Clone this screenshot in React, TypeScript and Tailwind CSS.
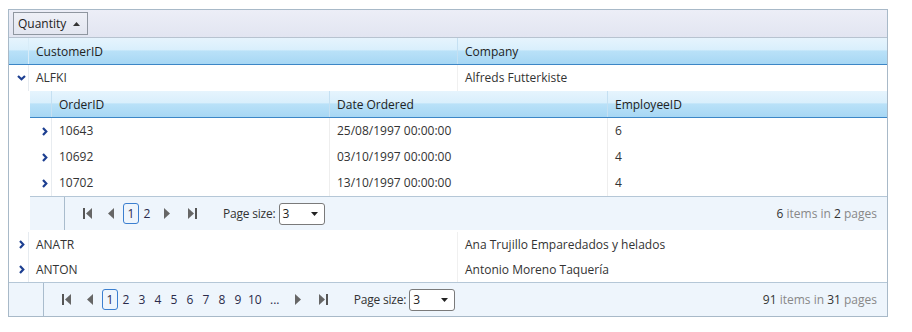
import React from "react";

const font = { fontFamily: '"Open Sans", "Noto Sans", sans-serif' };

function Chevron({ down }: { down?: boolean }) {
  return down ? (
    <svg width="9" height="6" viewBox="0 0 9 6">
      <path d="M1 1 L4.5 4.3 L8 1" fill="none" stroke="#1d3f91" strokeWidth="2.2" />
    </svg>
  ) : (
    <svg width="6" height="9" viewBox="0 0 6 9">
      <path d="M1 1 L4.3 4.5 L1 8" fill="none" stroke="#1d3f91" strokeWidth="2.2" />
    </svg>
  );
}

function First() {
  return (
    <svg width="9" height="11" viewBox="0 0 9 11">
      <rect x="0" y="0" width="2" height="11" fill="#555" />
      <path d="M9 0 L3 5.5 L9 11 Z" fill="#666" />
    </svg>
  );
}
function Prev() {
  return (
    <svg width="6" height="11" viewBox="0 0 6 11">
      <path d="M6 0 L0 5.5 L6 11 Z" fill="#666" />
    </svg>
  );
}
function Next() {
  return (
    <svg width="6" height="11" viewBox="0 0 6 11">
      <path d="M0 0 L6 5.5 L0 11 Z" fill="#666" />
    </svg>
  );
}
function Last() {
  return (
    <svg width="9" height="11" viewBox="0 0 9 11">
      <path d="M0 0 L6 5.5 L0 11 Z" fill="#666" />
      <rect x="7" y="0" width="2" height="11" fill="#555" />
    </svg>
  );
}

function Select() {
  return (
    <div className="flex h-[22px] w-[46px] items-center justify-between rounded-[3px] border border-[#7a7a7a] bg-white pl-[3px] pr-[6px] text-[12px] text-[#222]">
      <span>3</span>
      <svg width="7" height="4" viewBox="0 0 7 4">
        <path d="M0 0 L7 0 L3.5 4 Z" fill="#222" />
      </svg>
    </div>
  );
}

function Pager({
  pages,
  total,
  count,
}: {
  pages: string[];
  total: string;
  count: string;
}) {
  return (
    <div className="flex h-[34px] border-t border-[#b5c7d7] bg-[#eef5fc]">
      <div className="w-[35px] shrink-0 border-r border-[#a9bccd]" />
      <div className="flex flex-1 items-center pl-[18px]">
        <div className="flex items-center">
          <First />
          <div className="ml-[16px]">
            <Prev />
          </div>
          <div className="ml-[9px] flex items-center">
            {pages.map((p, i) => (
              <span
                key={i}
                className={
                  i === 0
                    ? "flex h-[21px] w-[16px] items-center justify-center rounded-[3px] border border-[#3b7fd0] text-[#2a2a4a]"
                    : p === "..."
                    ? "flex h-[21px] min-w-[22px] items-center justify-center px-[4px] text-[#2a2a4a]"
                    : "flex h-[21px] min-w-[16px] items-center justify-center px-[2px] text-[#2a2a4a]"
                }
              >
                {p}
              </span>
            ))}
          </div>
          <div className="ml-[9px]">
            <Next />
          </div>
          <div className="ml-[18px]">
            <Last />
          </div>
        </div>
        <div className="ml-[26px] flex items-center gap-[3px] text-[#333]">
          <span className="tracking-[-0.2px]">Page size:</span>
          <Select />
        </div>
        <div className="ml-auto pr-[10px] text-[#888]">
          <span className="text-[#333]">{count}</span> items in{" "}
          <span className="text-[#333]">{total}</span> pages
        </div>
      </div>
    </div>
  );
}

const headerBg =
  "bg-[linear-gradient(to_bottom,#e6f4fd_0%,#d9effc_45%,#b9e1f8_50%,#a7d7f4_100%)]";

export default function App() {
  return (
    <div className="h-[332px] w-[912px] bg-white pl-[8px] pt-[9px] text-[12px] text-[#333]" style={font}>
      <div className="w-[880px] border border-[#a8b9c8]">
        {/* group panel */}
        <div className="flex h-[28px] items-center border-b border-[#b7c3d0] bg-[linear-gradient(to_bottom,#eceef7,#e2e5f1)] pl-[4px]">
          <div className="flex h-[23px] w-[75px] items-center border border-[#8f96a0] bg-[linear-gradient(to_bottom,#eef0f7,#e3e6f0)] pl-[4px] text-[#222]">
            <span>Quantity</span>
            <svg className="ml-[7px]" width="7" height="4" viewBox="0 0 7 4">
              <path d="M0 4 L7 4 L3.5 0 Z" fill="#333" />
            </svg>
          </div>
        </div>
        {/* header */}
        <div className={`flex h-[27px] border-b border-[#3c86c6] ${headerBg}`}>
          <div className="w-[20px] shrink-0 border-r border-[#d8ecf8]" />
          <div className="flex w-[429px] items-center border-r border-[#c5e0f2] pl-[7px] pt-[1px] text-[#222]">CustomerID</div>
          <div className="flex flex-1 items-center pl-[7px] pt-[1px] text-[#222]">Company</div>
        </div>
        {/* ALFKI row */}
        <div className="flex h-[26px]">
          <div className="flex w-[20px] shrink-0 items-center justify-end border-r border-[#e6ebf0] pr-[2px]">
            <Chevron down />
          </div>
          <div className="flex w-[429px] items-center border-r border-[#f0f0f0] pl-[7px]">ALFKI</div>
          <div className="flex flex-1 items-center pl-[7px]">Alfreds Futterkiste</div>
        </div>
        {/* detail */}
        <div className="flex">
          <div className="w-[21px] shrink-0" />
          <div className="flex-1 pb-[2px]">
            <div className={`flex h-[27px] border-b border-[#3c86c6] ${headerBg}`}>
              <div className="w-[22px] shrink-0 border-r border-[#c5e0f2]" />
              <div className="flex w-[278px] items-center border-r border-[#c5e0f2] pl-[7px] pt-[1px] text-[#222]">OrderID</div>
              <div className="flex w-[278px] items-center border-r border-[#c5e0f2] pl-[7px] pt-[1px] text-[#222]">Date Ordered</div>
              <div className="flex flex-1 items-center pl-[7px] pt-[1px] text-[#222]">EmployeeID</div>
            </div>
            {[
              ["10643", "25/08/1997 00:00:00", "6"],
              ["10692", "03/10/1997 00:00:00", "4"],
              ["10702", "13/10/1997 00:00:00", "4"],
            ].map((r) => (
              <div key={r[0]} className="flex h-[26px]">
                <div className="flex w-[22px] shrink-0 items-center justify-end border-r border-[#e8ecf0] pr-[3px]">
                  <Chevron />
                </div>
                <div className="flex w-[278px] items-center border-r border-[#eeeeee] pl-[7px]">{r[0]}</div>
                <div className="flex w-[278px] items-center border-r border-[#eeeeee] pl-[7px]">{r[1]}</div>
                <div className="flex flex-1 items-center pl-[7px]">{r[2]}</div>
              </div>
            ))}
            <Pager pages={["1", "2"]} count="6" total="2" />
          </div>
        </div>
        {[
          ["ANATR", "Ana Trujillo Emparedados y helados"],
          ["ANTON", "Antonio Moreno Taquería"],
        ].map((r) => (
          <div key={r[0]} className="flex h-[25px]">
            <div className="flex w-[20px] shrink-0 items-center justify-end border-r border-[#e6ebf0] pr-[3px]">
              <Chevron />
            </div>
            <div className="flex w-[429px] items-center border-r border-[#f0f0f0] pl-[7px]">{r[0]}</div>
            <div className="flex flex-1 items-center pl-[7px]">{r[1]}</div>
          </div>
        ))}
        <Pager
          pages={["1", "2", "3", "4", "5", "6", "7", "8", "9", "10", "..."]}
          count="91"
          total="31"
        />
      </div>
    </div>
  );
}
